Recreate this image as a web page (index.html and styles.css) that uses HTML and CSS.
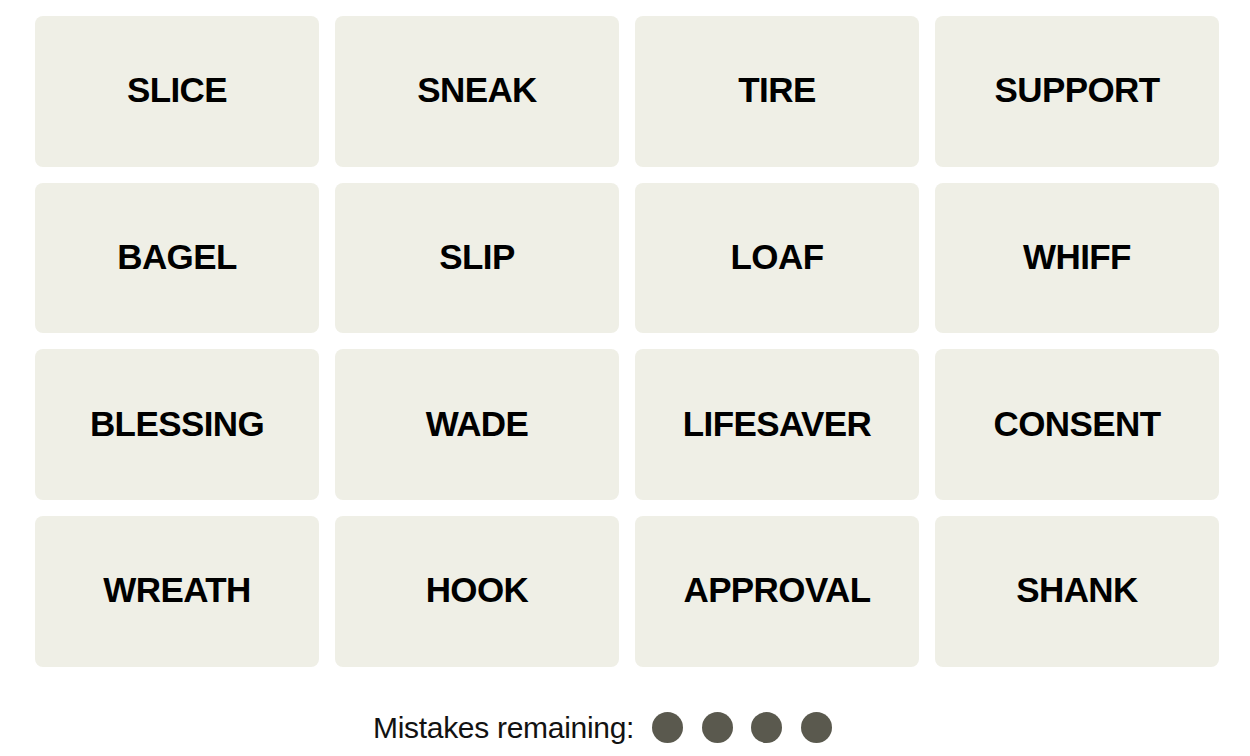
FILE: index.html
```html
<!DOCTYPE html>
<html>
<head>
<meta charset="utf-8">
<link rel="stylesheet" href="styles.css">
</head>
<body>
<main class="game">
  <section class="board">
    <div class="tile">SLICE</div>
    <div class="tile">SNEAK</div>
    <div class="tile">TIRE</div>
    <div class="tile">SUPPORT</div>
    <div class="tile">BAGEL</div>
    <div class="tile">SLIP</div>
    <div class="tile">LOAF</div>
    <div class="tile">WHIFF</div>
    <div class="tile">BLESSING</div>
    <div class="tile">WADE</div>
    <div class="tile">LIFESAVER</div>
    <div class="tile">CONSENT</div>
    <div class="tile">WREATH</div>
    <div class="tile">HOOK</div>
    <div class="tile">APPROVAL</div>
    <div class="tile">SHANK</div>
  </section>
  <div class="mistakes">
    <span class="mistakes-label">Mistakes remaining:</span>
    <span class="dots">
      <span class="dot"></span>
      <span class="dot"></span>
      <span class="dot"></span>
      <span class="dot"></span>
    </span>
  </div>
</main>
</body>
</html>
```

FILE: styles.css
```css
html, body {
  margin: 0;
  padding: 0;
  background: #ffffff;
}

.game {
  padding: 16px 31px 0 35px;
  font-family: "Liberation Sans", Arial, sans-serif;
  color: #000;
}

.board {
  display: grid;
  grid-template-columns: repeat(4, 284px);
  grid-auto-rows: 150.67px;
  gap: 16px;
}

.tile {
  background: #efefe6;
  border-radius: 8px;
  display: flex;
  align-items: center;
  justify-content: center;
  font-weight: 700;
  font-size: 35px;
  letter-spacing: -0.6px;
  padding-bottom: 2px;
  box-sizing: border-box;
}

.mistakes {
  display: flex;
  align-items: center;
  padding-left: 338px;
  margin-top: 45px;
  height: 32px;
}

.mistakes-label {
  font-size: 30px;
  letter-spacing: -0.3px;
  color: #121212;
}

.dots {
  display: flex;
  gap: 18.5px;
  margin-left: 18px;
}

.dot {
  width: 31px;
  height: 31px;
  border-radius: 50%;
  background: #5a594e;
}
```
